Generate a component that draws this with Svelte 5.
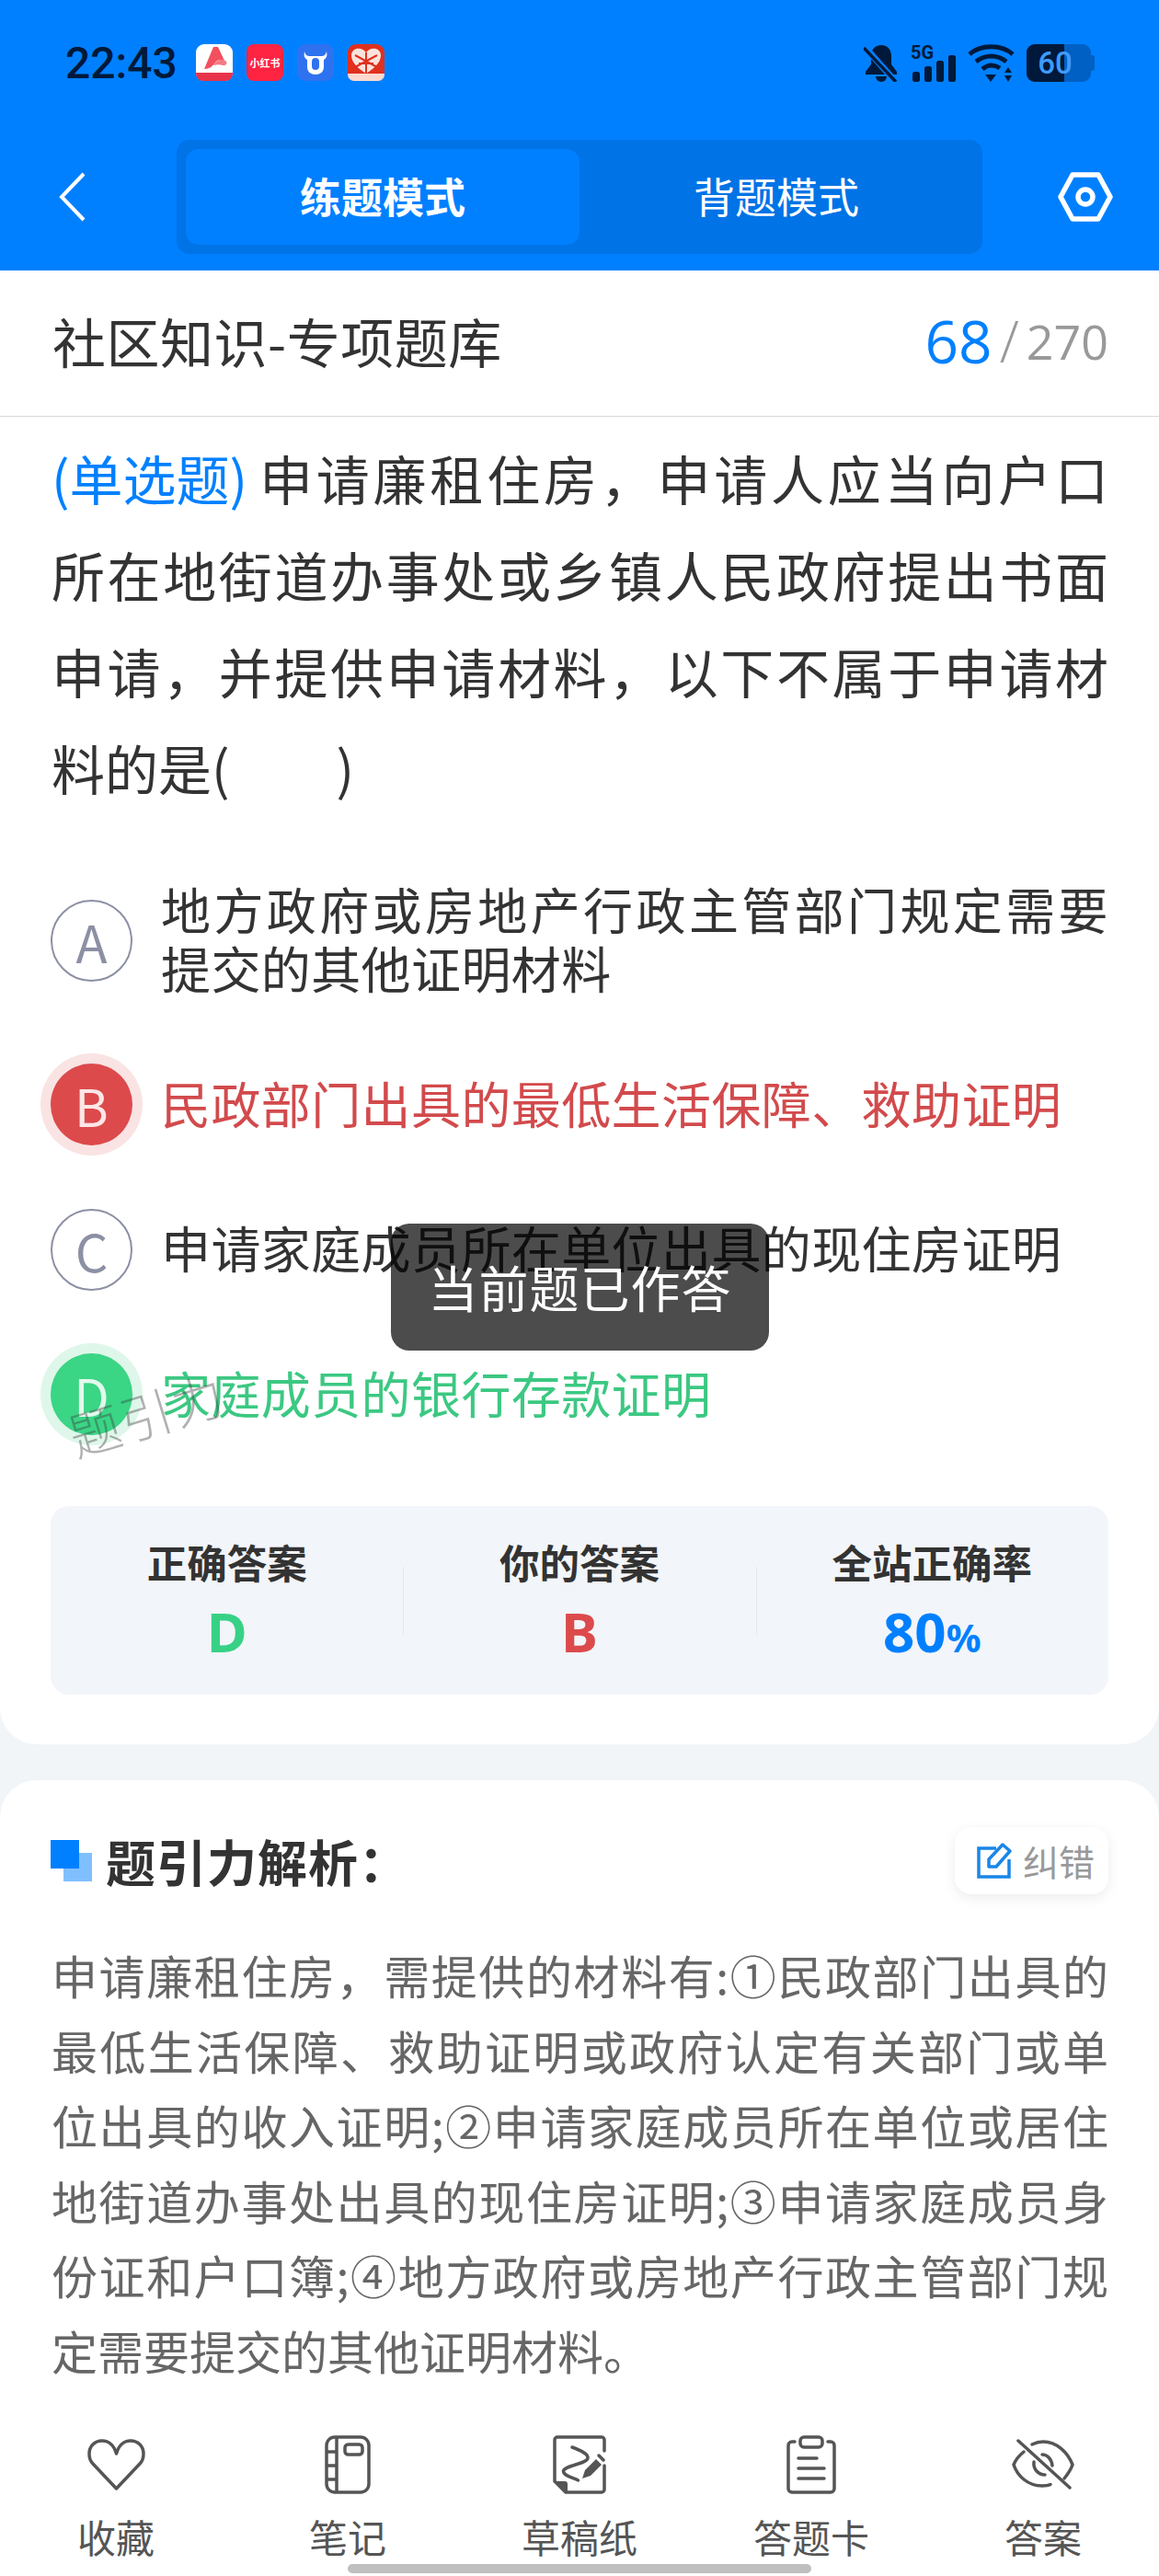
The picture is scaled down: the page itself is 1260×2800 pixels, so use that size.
<script>
  const options = [
    { key: 'A', text: '地方政府或房地产行政主管部门规定需要提交的其他证明材料' },
    { key: 'B', text: '民政部门出具的最低生活保障、救助证明', state: 'wrong' },
    { key: 'C', text: '申请家庭成员所在单位出具的现住房证明' },
    { key: 'D', text: '家庭成员的银行存款证明', state: 'right' }
  ]
</script>

<div class="page">
  <header class="top">
    <div class="status">
      <span class="time">22:43</span>
      <div class="apps">
        <svg width="40" height="40" viewBox="0 0 40 40">
          <rect width="40" height="40" rx="9" fill="#fff"/>
          <path d="M0 31h40v1a8 8 0 0 1-8 8H8a8 8 0 0 1-8-8z" fill="#e8324a"/>
          <path d="M9 27 19 3h5l7 15c-4-2-7-1-9 1-4 5-7 8-13 8z" fill="#f2505e"/>
          <path d="M19 23c3-5 9-8 13-5 3 2 1 6-3 5-3-1-6-1-10 0z" fill="#f47a84"/>
        </svg>
        <svg width="40" height="40" viewBox="0 0 40 40">
          <rect width="40" height="40" rx="8" fill="#ff2442"/>
          <text x="20" y="25" text-anchor="middle" class="mini">小红书</text>
        </svg>
        <svg width="40" height="40" viewBox="0 0 40 40">
          <rect width="40" height="40" rx="9" fill="#2f72f0"/>
          <path d="M8 8c1 4 3 5 6 5h12c3 0 5-1 6-5 1 5 0 7-3 9v8c0 5-4 8-9 8s-9-3-9-8v-8c-3-2-4-4-3-9z" fill="#fff"/>
          <rect x="16" y="15" width="8" height="13" rx="4" fill="#2f72f0"/>
        </svg>
        <svg width="40" height="40" viewBox="0 0 40 40">
          <rect width="40" height="40" rx="9" fill="#e0301e"/>
          <path d="M0 32h40v1a7 7 0 0 1-7 7H7a7 7 0 0 1-7-7z" fill="#fbd9cf"/>
          <path d="M20 32C11 26 4 20 4 12 4 4 15 2 20 9c5-7 16-5 16 3 0 8-7 14-16 20z" fill="#fbe3dc"/>
          <path d="M20 9v23M8 12l24 13M32 12 8 25M12 21h16" stroke="#e0301e" stroke-width="2"/>
        </svg>
      </div>
      <div class="sys">
        <svg width="38" height="41" viewBox="0 0 38 41" fill="#00193a">
          <path d="M19 1C12 1 8 6 8 13v9l-6 8v3h34v-3l-6-8v-9C30 6 26 1 19 1z"/>
          <path d="M13 35h12a6 6 0 0 1-12 0z"/>
          <path d="M1 3 34 40" stroke="#0080ff" stroke-width="7"/>
          <path d="M0 4 35 41" stroke="#00193a" stroke-width="3.500"/>
        </svg>
        <div class="signal">
          <span class="five">5G</span>
          <svg width="47" height="29" viewBox="0 0 47 29" fill="#00193a">
            <rect x="0" y="18" width="8" height="11" rx="2.500"/>
            <rect x="13" y="12" width="8" height="17" rx="2.500"/>
            <rect x="26" y="6" width="8" height="23" rx="2.500"/>
            <rect x="39" y="0" width="8" height="29" rx="2.500"/>
          </svg>
        </div>
        <svg width="51" height="41" viewBox="0 0 51 41" fill="none" stroke="#00193a" stroke-width="5">
          <path d="M2 11C14 0 37 0 49 11"/>
          <path d="M9 19c10-8 23-8 33 0"/>
          <path d="M16 27c6-5 13-5 19-1"/>
          <path d="M19 33h12l-6 8z" fill="#00193a" stroke="none"/>
          <path d="M44 25l4 6h-8zM44 41l4-7h-8z" fill="#00193a" stroke="none"/>
        </svg>
        <div class="batt">
          <span class="fill"></span>
          <span class="num">60</span>
        </div>
      </div>
    </div>
    <div class="bar">
      <svg class="back" width="30" height="54" viewBox="0 0 30 54" fill="none" stroke="#fff" stroke-width="4">
        <path d="M27 2 3 27l24 25"/>
      </svg>
      <div class="tabs">
        <div class="tab on">练题模式</div>
        <div class="tab">背题模式</div>
      </div>
      <svg class="gear" width="60" height="54" viewBox="0 0 60 54" fill="none" stroke="#fff" stroke-width="5.500" stroke-linejoin="round">
        <path d="M16 3h28l13 24-13 24H16L3 27z"/>
        <circle cx="30" cy="27" r="8"/>
      </svg>
    </div>
  </header>

  <section class="card first">
    <div class="title">
      <h1>社区知识-专项题库</h1>
      <div class="count"><b>68</b><i>/</i><span>270</span></div>
    </div>
    <p class="question"><span class="kind">(单选题)</span> 申请廉租住房，申请人应当向户口所在地街道办事处或乡镇人民政府提出书面申请，并提供申请材料，以下不属于申请材料的是(<span class="blank"></span>)</p>

    <ul class="options">
      {#each options as o}
        <li class={o.state ?? ''}>
          <span class="letter">{o.key}</span>
          <span class="opt-text">{o.text}</span>
        </li>
      {/each}
    </ul>

    <div class="result">
      <div class="cell"><strong>正确答案</strong><em class="green">D</em></div>
      <div class="cell"><strong>你的答案</strong><em class="red">B</em></div>
      <div class="cell"><strong>全站正确率</strong><em class="blue">80<small>%</small></em></div>
    </div>
  </section>

  <section class="card second">
    <div class="head">
      <div class="head-l">
        <span class="mark"></span>
        <h2>题引力解析：</h2>
      </div>
      <div class="fix">
        <svg width="39" height="40" viewBox="0 0 39 40" fill="none" stroke="#1a86e8" stroke-width="3.500">
          <path d="M21 7H2v31h33V19"/>
          <path d="M13 27v-8L28 3l8 7-15 17z" stroke-linejoin="round"/>
        </svg>
        <span>纠错</span>
      </div>
    </div>
    <p class="analysis">申请廉租住房，需提供的材料有:①民政部门出具的最低生活保障、救助证明或政府认定有关部门或单位出具的收入证明;②申请家庭成员所在单位或居住地街道办事处出具的现住房证明;③申请家庭成员身份证和户口簿;④地方政府或房地产行政主管部门规定需要提交的其他证明材料。</p>
  </section>

  <nav class="nav">
    <div class="item">
      <svg width="63" height="56" viewBox="0 0 63 56" fill="none" stroke="#555" stroke-width="3.500" stroke-linejoin="round">
        <path d="M31.500 16C29 7 23 2 16 2 8 2 2 8 2 16c0 5 2 9 4 11l25.500 27L57 27c2-2 4-6 4-11 0-8-6-14-14-14-7 0-13 5-15.500 14z"/>
      </svg>
      <span>收藏</span>
    </div>
    <div class="item">
      <svg width="50" height="64" viewBox="0 0 50 64" fill="none" stroke="#555" stroke-width="3.500">
        <rect x="2" y="2" width="46" height="60" rx="9"/>
        <path d="M13 2v60M2 18h11M2 33h11M2 48h11"/>
        <rect x="22" y="10" width="19" height="11" rx="3.500"/>
      </svg>
      <span>笔记</span>
    </div>
    <div class="item">
      <svg width="58" height="64" viewBox="0 0 58 64" fill="none" stroke="#555" stroke-width="3.500" stroke-linecap="round">
        <path d="M56 17V5a3 3 0 0 0-3-3H5a3 3 0 0 0-3 3v45l12 12h39a3 3 0 0 0 3-3V33"/>
        <path d="M3 50h10c2 0 3 1 3 3v9z" fill="#555" stroke="none"/>
        <path d="M21 13c8 3 18 7 17 12-1 6-26 8-26.500 14 0 5 10 7 16 10"/>
        <path d="M32 47l3-9 12-12 6 6-12 12z" fill="#555" stroke="none"/>
        <path d="M50 22l5 5"/>
      </svg>
      <span>草稿纸</span>
    </div>
    <div class="item">
      <svg width="54" height="64" viewBox="0 0 54 64" fill="none" stroke="#555" stroke-width="3.500" stroke-linecap="round">
        <path d="M9 7H6a4 4 0 0 0-4 4v47a4 4 0 0 0 4 4h42a4 4 0 0 0 4-4V11a4 4 0 0 0-4-4h-3"/>
        <rect x="15" y="2" width="24" height="11" rx="4"/>
        <path d="M13 25h20M13 36h28M13 47h28"/>
      </svg>
      <span>答题卡</span>
    </div>
    <div class="item">
      <svg width="68" height="56" viewBox="0 0 68 56" fill="none" stroke="#555" stroke-width="3.500" stroke-linecap="round">
        <path d="M13 14C8 18 4 23 2 28c4 12 15 23 31 23 4 0 7-.5 9-1.500"/>
        <path d="M22 6c4-2 8-3 12-3 15 0 27 12 32 25-2 6-5 10-9 15"/>
        <path d="M24 25c-1 8 5 14 12 14"/>
        <path d="M33 17c5 0 10 4 11 12"/>
        <path d="M7 2l56 51"/>
      </svg>
      <span>答案</span>
    </div>
    <span class="home"></span>
  </nav>

  <div class="toast">当前题已作答</div>
  <div class="mark-text">题引力</div>
</div>

<style>
  :global(body) {
    margin: 0;
    font-family: "Noto Sans CJK SC", "Noto Sans", sans-serif;
  }
  .page {
    position: relative;
    display: flex;
    flex-direction: column;
    width: 1260px;
    height: 2800px;
    overflow: hidden;
    background: #f1f5f8;
    color: #333;
  }
  h1, h2, p, ul {
    margin: 0;
    padding: 0;
    font-weight: normal;
  }
  .top {
    height: 294px;
    background: #0080ff;
    box-sizing: border-box;
    overflow: hidden;
  }
  .status {
    display: flex;
    align-items: center;
    height: 68px;
    margin-top: 34px;
    padding: 0 70px 0 71px;
    color: #00193a;
  }
  .time {
    font-family: Roboto, sans-serif;
    font-size: 48px;
    font-weight: 500;
    width: 142px;
  }
  .apps {
    display: flex;
    gap: 15px;
  }
  .mini {
    font-size: 11px;
    fill: #fff;
    font-weight: 700;
  }
  .sys {
    display: flex;
    align-items: center;
    gap: 13px;
    margin-left: auto;
  }
  .signal {
    position: relative;
    width: 49px;
    height: 41px;
  }
  .signal svg {
    position: absolute;
    left: 2px;
    bottom: 0;
  }
  .five {
    position: absolute;
    left: 0;
    top: -3px;
    font: 700 20px "Roboto", sans-serif;
  }
  .batt {
    position: relative;
    width: 70px;
    height: 41px;
    margin-right: 4px;
    border-radius: 9px;
    background: #0060c4;
    text-align: center;
  }
  .batt::after {
    content: "";
    position: absolute;
    right: -4px;
    top: 12px;
    width: 4px;
    height: 17px;
    border-radius: 0 3px 3px 0;
    background: #0060c4;
  }
  .fill {
    position: absolute;
    left: 0;
    top: 0;
    bottom: 0;
    width: 41px;
    border-radius: 9px 0 0 9px;
    background: #00193a;
  }
  .num {
    position: relative;
    font: 500 33px/41px "Roboto", sans-serif;
    color: #3f9bff;
    margin-right: 8px;
  }
  .bar {
    display: flex;
    align-items: center;
    height: 124px;
    margin-top: 50px;
    padding: 0 50px 0 64px;
  }
  .back {
    flex: none;
  }
  .tabs {
    display: flex;
    width: 876px;
    height: 124px;
    box-sizing: border-box;
    margin-left: 98px;
    padding: 10px;
    background: #0073e6;
    border-radius: 14px;
  }
  .tab {
    flex: 1;
    border-radius: 14px;
    text-align: center;
    color: #fff;
    font-size: 45px;
    line-height: 102px;
  }
  .tab.on {
    background: #0080ff;
    font-weight: 700;
  }
  .gear {
    margin-left: auto;
  }
  .card {
    background: #fff;
  }
  .first {
    height: 1602px;
    border-radius: 0 0 40px 40px;
  }
  .title {
    display: flex;
    align-items: center;
    justify-content: space-between;
    height: 159px;
    padding: 0 55px 6px 57px;
    box-sizing: border-box;
    border-bottom: 1px solid #d9d9d9;
  }
  h1 {
    font-size: 58px;
    letter-spacing: 0.500px;
    color: #333;
  }
  .count {
    display: flex;
    align-items: center;
    font-family: "Open Sans", sans-serif;
    color: #999;
    font-size: 52px;
  }
  .count b {
    font-weight: 400;
    font-size: 64px;
    color: #0080ff;
  }
  .count i {
    font-style: normal;
    font-weight: 300;
    font-size: 62px;
    margin: 0 8px;
  }
  .question {
    width: 1149px;
    margin: 14px 0 0 56px;
    font-size: 58px;
    line-height: 105px;
    text-align: justify;
  }
  .kind {
    display: inline-block;
    margin-right: -4px;
    color: #0080ff;
  }
  .blank {
    display: inline-block;
    width: 116px;
  }
  .options {
    list-style: none;
    margin: 49px 55px 0;
  }
  .options li {
    display: flex;
    align-items: center;
    box-sizing: border-box;
    min-height: 130px;
    margin-bottom: 27.500px;
    gap: 31px;
    font-size: 54px;
    line-height: 64px;
    letter-spacing: 0.400px;
  }
  .opt-text {
    padding: 20px 0 24px;
    text-align: justify;
  }
  .letter {
    flex: none;
    width: 89px;
    height: 89px;
    box-sizing: border-box;
    border: 2px solid #8c90a4;
    border-radius: 50%;
    text-align: center;
    font-size: 56px;
    line-height: 85px;
    letter-spacing: 0;
    color: #8c90a4;
  }
  .wrong .letter {
    background: #dc4a4c;
    border: 0;
    box-shadow: 0 0 0 11px #fae3e3;
    color: #fde6e6;
    line-height: 89px;
  }
  .wrong .opt-text {
    color: #d24a4c;
  }
  .right .letter {
    background: #3ad585;
    border: 0;
    box-shadow: 0 0 0 11px #dff7ea;
    color: #e2f9ec;
    line-height: 89px;
  }
  .right .opt-text {
    color: #3cc882;
  }
  .result {
    display: flex;
    height: 205px;
    margin: 56.500px 55px 0;
    background: #f2f5f9;
    border-radius: 20px;
  }
  .cell {
    position: relative;
    flex: 1;
    display: flex;
    flex-direction: column;
    align-items: center;
    padding-top: 33px;
    box-sizing: border-box;
  }
  .cell + .cell::before {
    content: "";
    position: absolute;
    left: 0;
    top: 66px;
    height: 74px;
    width: 1px;
    background: #e6e9ee;
  }
  .cell strong {
    font-size: 43.500px;
    line-height: 56px;
    font-weight: 700;
  }
  .cell em {
    font-style: normal;
    font-weight: 700;
    font-size: 60px;
    line-height: 76px;
    margin-top: 9px;
    font-family: "Noto Sans", sans-serif;
  }
  .cell small {
    font-size: 42px;
  }
  .green { color: #37d186; }
  .red { color: #dc4a4c; }
  .blue { color: #0080ff; }
  .second {
    flex: 1;
    margin-top: 39px;
    border-radius: 40px 40px 0 0;
  }
  .head {
    display: flex;
    align-items: center;
    justify-content: space-between;
    padding: 50px 55px 0;
    height: 74px;
  }
  .head-l {
    display: flex;
    align-items: center;
    gap: 15px;
  }
  .mark {
    position: relative;
    width: 45px;
    height: 45px;
  }
  .mark::before {
    content: "";
    position: absolute;
    right: 0;
    bottom: 0;
    width: 31px;
    height: 31px;
    background: #80bfff;
  }
  .mark::after {
    content: "";
    position: absolute;
    left: 0;
    top: 0;
    width: 31px;
    height: 31px;
    background: #0080ff;
  }
  h2 {
    font-size: 54px;
    font-weight: 700;
    letter-spacing: 1px;
  }
  .fix {
    display: flex;
    align-items: center;
    gap: 11px;
    box-sizing: border-box;
    width: 167px;
    height: 73px;
    padding-left: 24px;
    border-radius: 18px;
    box-shadow: 0 4px 14px rgba(0, 0, 0, 0.08);
    font-size: 39px;
    color: #999;
  }
  .analysis {
    width: 1149px;
    margin: 47px 0 0 56px;
    font-size: 50px;
    line-height: 81.500px;
    text-align: justify;
    color: #666;
  }
  .nav {
    position: absolute;
    left: 0;
    right: 0;
    bottom: 0;
    display: flex;
    justify-content: space-around;
    height: 168px;
    padding: 15px 0 0;
    box-sizing: border-box;
    background: #fff;
  }
  .item {
    display: grid;
    grid-template-rows: 64px 50px;
    justify-items: center;
    align-items: center;
    align-content: space-between;
    width: 252px;
    height: 135px;
    font-size: 42px;
    line-height: 50px;
    color: #555;
  }
  .home {
    position: absolute;
    left: 378px;
    bottom: 3px;
    width: 504px;
    height: 10px;
    border-radius: 5px;
    background: #bfbfbf;
  }
  .toast {
    position: absolute;
    left: 425px;
    top: 1330px;
    width: 411px;
    height: 138px;
    border-radius: 20px;
    background: rgba(0, 0, 0, 0.7);
    color: #fff;
    font-size: 54px;
    letter-spacing: 1px;
    line-height: 138px;
    text-align: center;
  }
  .mark-text {
    position: absolute;
    left: 72px;
    top: 1495px;
    transform: rotate(-17deg);
    font-size: 56px;
    letter-spacing: 2px;
    color: rgba(60, 60, 60, 0.4);
    font-weight: 300;
  }
</style>
